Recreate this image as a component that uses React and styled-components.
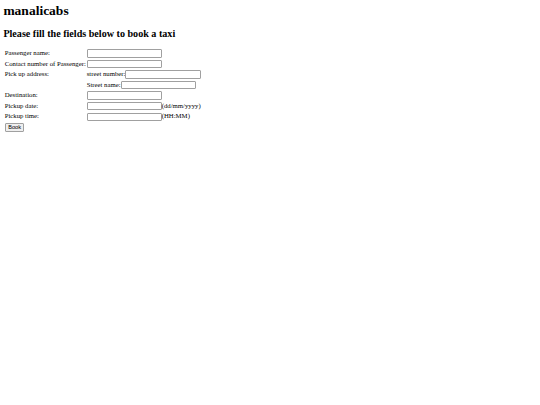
import React from "react";
import styled, { createGlobalStyle } from "styled-components";

const S = 0.421875;
const u = (n) => `${(n * S).toFixed(3)}px`;

const Global = createGlobalStyle`
  html, body { margin: 0; padding: 0; background: #fff; }
  body {
    font-family: "Liberation Serif", "Times New Roman", serif;
    font-size: ${u(16)};
    color: #000;
  }
`;

const Page = styled.div`
  padding: ${u(8)};
`;

const Title = styled.h1`
  font-size: ${u(32)};
  line-height: ${u(37)};
  font-weight: bold;
  margin: 0 0 ${u(21.44)};
`;

const Subtitle = styled.h2`
  font-size: ${u(24)};
  line-height: ${u(28)};
  font-weight: bold;
  margin: ${u(19.92)} 0;
`;

const Form = styled.form`
  margin: 0;
`;

const FormTable = styled.table`
  border-collapse: collapse;
  border-spacing: 0;
  margin: ${u(1)} 0 0 ${u(1)};
`;

const Cell = styled.td`
  padding: ${u(2)};
  padding-right: ${(p) => (p.$label ? "0" : u(2))};
  line-height: ${u(21)};
  vertical-align: ${(p) => (p.$top ? "top" : "middle")};
  white-space: nowrap;
`;

const Line = styled.div`
  display: flex;
  align-items: center;
  height: ${u(21)};
  & + & {
    margin-top: ${u(4)};
  }
`;

const TextInput = styled.input.attrs({ type: "text" })`
  font-family: "Liberation Sans", Arial, sans-serif;
  font-size: ${u(13.333)};
  padding: 0 ${u(2)};
  border: 1px solid #a0a0a0;
  border-radius: 1px;
  width: ${u(178)};
  height: ${u(20)};
  box-sizing: border-box;
  vertical-align: middle;
  margin: 0;
  background: #fff;
  display: inline-block;
`;

const Field = styled.span`
  display: inline-flex;
  align-items: center;
  height: ${u(21)};
  vertical-align: middle;
`;

const BookButton = styled.button`
  font-family: "Liberation Sans", Arial, sans-serif;
  font-size: ${u(13.333)};
  line-height: 1;
  padding: 0 ${u(6)};
  height: ${u(21)};
  border: 1px solid #a0a0a0;
  border-radius: 1px;
  background: #efefef;
  color: #000;
  margin: 0;
  vertical-align: middle;
`;

const rows = [
  { label: "Passenger name:" },
  { label: "Contact number of Passenger:" },
];

const rowsAfter = [
  { label: "Destination:" },
  { label: "Pickup date:", hint: "(dd/mm/yyyy)" },
  { label: "Pickup time:", hint: "(HH:MM)" },
];

const InputRow = ({ label, hint }) => (
  <tr>
    <Cell $label>{label}</Cell>
    <Cell>
      <Field>
        <TextInput />
        {hint}
      </Field>
    </Cell>
  </tr>
);

export default function App() {
  return (
    <>
      <Global />
      <Page>
        <Title>manalicabs</Title>
        <Subtitle>Please fill the fields below to book a taxi</Subtitle>
        <Form>
          <FormTable>
            <tbody>
              {rows.map((r) => (
                <InputRow key={r.label} {...r} />
              ))}
              <tr>
                <Cell $label $top>
                  <Line>Pick up address:</Line>
                </Cell>
                <Cell>
                  <Line>street number:<TextInput /></Line>
                  <Line>Street name:<TextInput /></Line>
                </Cell>
              </tr>
              {rowsAfter.map((r) => (
                <InputRow key={r.label} {...r} />
              ))}
              <tr>
                <Cell $label>
                  <BookButton type="button">Book</BookButton>
                </Cell>
                <Cell />
              </tr>
            </tbody>
          </FormTable>
        </Form>
      </Page>
    </>
  );
}
